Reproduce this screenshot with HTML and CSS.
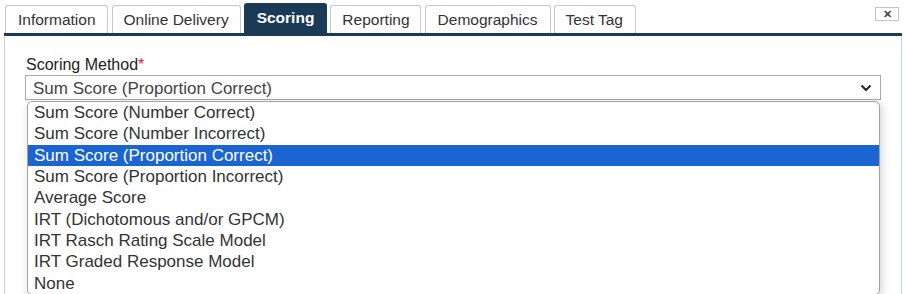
FILE: index.html
```html
<!DOCTYPE html>
<html>
<head>
<meta charset="utf-8">
<link rel="stylesheet" href="styles.css">
</head>
<body>
<div class="dialog">
  <div class="tabbar">
    <div class="tab tab-info">Information</div>
    <div class="tab tab-online">Online Delivery</div>
    <div class="tab tab-active">Scoring</div>
    <div class="tab tab-report">Reporting</div>
    <div class="tab tab-demo">Demographics</div>
    <div class="tab tab-tag">Test Tag</div>
    <div class="close">&#x2715;</div>
  </div>
  <div class="rule"></div>
  <div class="panel">
    <label class="field-label">Scoring Method<span class="req">*</span></label>
    <div class="select-wrap">
      <div class="select">
        <span class="select-text">Sum Score (Proportion Correct)</span>
        <svg class="chev" width="12" height="8" viewBox="0 0 12 8"><path d="M1.5 1.5 L6 6 L10.5 1.5" fill="none" stroke="#222" stroke-width="2"/></svg>
      </div>
      <ul class="listbox">
        <li class="opt">Sum Score (Number Correct)</li>
        <li class="opt">Sum Score (Number Incorrect)</li>
        <li class="opt opt-selected">Sum Score (Proportion Correct)</li>
        <li class="opt">Sum Score (Proportion Incorrect)</li>
        <li class="opt">Average Score</li>
        <li class="opt">IRT (Dichotomous and/or GPCM)</li>
        <li class="opt">IRT Rasch Rating Scale Model</li>
        <li class="opt">IRT Graded Response Model</li>
        <li class="opt">None</li>
      </ul>
    </div>
  </div>
</div>
</body>
</html>
```
FILE: styles.css
```css
* { box-sizing: border-box; }
html, body { margin: 0; padding: 0; background: #fff; }
body {
  font-family: "Liberation Sans", Arial, sans-serif;
  width: 906px;
  height: 294px;
  overflow: hidden;
}
.dialog { display: flex; flex-direction: column; height: 294px; }
.tabbar {
  display: flex;
  align-items: flex-end;
  height: 33px;
  padding-left: 5px;
}
.tab {
  height: 28px;
  padding: 0 11px;
  margin-right: 3px;
  border: 1px solid #c9c9c9;
  border-bottom: none;
  border-radius: 3px 3px 0 0;
  background: #fff;
  color: #333;
  font-size: 15.5px;
  line-height: 27px;
  white-space: nowrap;
}
.tab-info { margin-right: 4px; padding: 0 11px 0 12px; }
.tab-online { padding: 0 11px; }
.tab-report { margin-right: 4px; padding: 0 10px 0 11px; }
.tab-demo { padding: 0 12px; }
.tab-tag { padding: 0 12px 0 11px; }
.tab-active {
  height: 30px;
  line-height: 28px;
  padding: 0 12px;
  background: #1b3a56;
  border-color: #1b3a56;
  color: #fff;
  font-weight: bold;
}
.close {
  align-self: flex-start;
  margin: 7px 7px 0 auto;
  width: 24px;
  height: 14px;
  border: 1px solid #c4c4c4;
  color: #444;
  font-size: 11px;
  line-height: 12px;
  text-align: center;
  font-weight: bold;
}
.rule {
  height: 3px;
  margin: 0 4px;
  background: #1b3a56;
}
.panel {
  flex: 1;
  margin: 0 4px;
  border-left: 1px solid #cdd3d9;
  border-right: 1px solid #c6d2dd;
  padding: 19px 20px 0 20px;
}
.field-label {
  display: block;
  font-size: 16px;
  line-height: 19px;
  color: #222;
  margin-left: 1px;
  margin-bottom: 1px;
}
.req { color: #e02828; }
.select-wrap { position: relative; }
.select {
  display: flex;
  align-items: center;
  height: 25px;
  border: 1px solid #aaa;
  background: #fff;
  padding: 0 7px;
}
.select-text {
  flex: 1;
  font-size: 17px;
  line-height: 23px;
  color: #444;
  padding-top: 1px;
}
.chev { margin-right: 1px; margin-top: 1px; }
.listbox {
  position: absolute;
  top: 26px;
  left: 2px;
  right: 1px;
  margin: 0;
  padding: 0;
  list-style: none;
  background: #fff;
  border: 1px solid #a3a3a3;
  border-radius: 5px;
  box-shadow: 2px 2px 10px rgba(0, 0, 0, 0.18);
  overflow: hidden;
}
.opt {
  height: 21.33px;
  line-height: 21.33px;
  font-size: 17px;
  color: #333;
  padding-left: 6px;
  white-space: nowrap;
}
.opt-selected { background: #1a65d2; color: #fff; }
```
